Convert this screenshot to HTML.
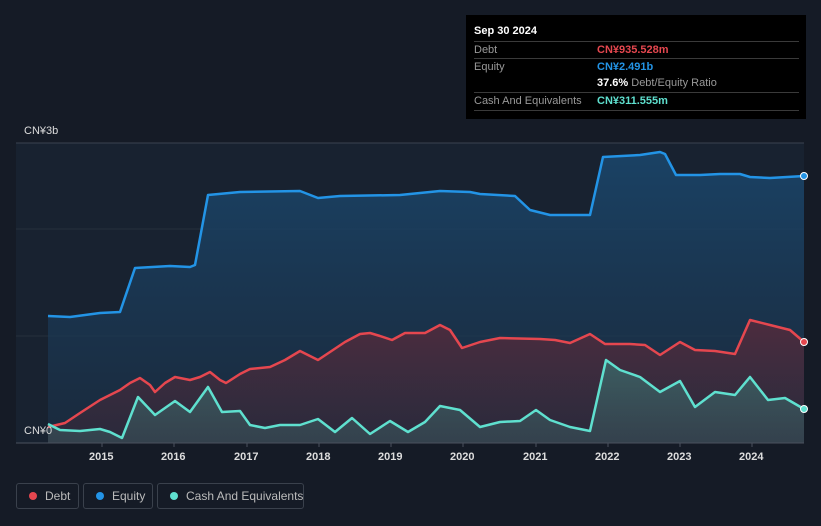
<!DOCTYPE html>
<html><head><meta charset="utf-8"><style>
body{margin:0;width:821px;height:526px;background:#151b26;font-family:"Liberation Sans",sans-serif;overflow:hidden;position:relative}
.tt{position:absolute;left:466px;top:15px;width:340px;height:104px;background:#000;color:#ddd;font-size:11px}
.tt .h{position:absolute;left:8px;top:10px;color:#fff;font-weight:bold;font-size:11px}
.row{position:absolute;left:8px;width:325px;border-top:1px solid #3a3a3a;height:17px;line-height:17px;color:#999}
.row span{position:absolute;left:123px;font-weight:bold}
.leg{position:absolute;top:483px;height:26px;border:1px solid #3a414c;border-radius:3px;color:#bbb;font-size:12px;line-height:24px;box-sizing:border-box;white-space:nowrap}
.leg i{position:absolute;left:12px;top:8px;width:8px;height:8px;border-radius:50%}
.leg b{font-weight:normal;position:absolute;left:28px}
.ax{position:absolute;top:451px;color:#ddd;font-size:11px;font-weight:bold}
</style></head><body>
<svg width="821" height="526" style="position:absolute;left:0;top:0">
<defs>
<linearGradient id="ge" x1="0" y1="0" x2="0" y2="1"><stop offset="0" stop-color="#1a4a72" stop-opacity=".8"/><stop offset="1" stop-color="#1b2f45" stop-opacity=".6"/></linearGradient>
<linearGradient id="gd" x1="0" y1="0" x2="0" y2="1"><stop offset="0" stop-color="#5a2a3a" stop-opacity=".8"/><stop offset="1" stop-color="#3a2a3a" stop-opacity=".5"/></linearGradient>
<linearGradient id="gc" x1="0" y1="0" x2="0" y2="1"><stop offset="0" stop-color="#3a6a6a" stop-opacity=".8"/><stop offset="1" stop-color="#3a5058" stop-opacity=".6"/></linearGradient>
</defs>
<rect x="16" y="143" width="788" height="300" fill="#182230"/>
<line x1="16" y1="143" x2="804" y2="143" stroke="#3a4350"/>
<line x1="16" y1="229" x2="804" y2="229" stroke="#26303c"/>
<line x1="16" y1="336" x2="804" y2="336" stroke="#26303c"/>
<polygon fill="url(#ge)" points="48,443 48,316 70,317 100,313 120,312 135,268 170,266 190,267 195,265 208,195 240,192 300,191 318,198 340,196 400,195 440,191 470,192 480,194 515,196 530,210 550,215 590,215 603,157 640,155 660,152 665,154 676,175 700,175 720,174 740,174 750,177 770,178 804,176 804,443"/>
<polygon fill="url(#gd)" points="48,443 48,427 65,423 80,413 100,400 120,390 130,383 140,378 150,385 155,392 165,383 175,377 190,380 200,377 210,372 220,380 226,383 240,374 250,369 270,367 285,360 300,351 318,360 330,352 345,342 360,334 370,333 380,336 392,340 405,333 425,333 440,325 450,330 462,348 480,342 500,338 540,339 555,340 570,343 590,334 605,344 630,344 645,345 660,355 680,342 695,350 715,351 735,354 750,320 770,325 790,330 804,342 804,443"/>
<polygon fill="url(#gc)" points="48,443 48,424 60,430 80,431 100,429 110,432 122,438 138,397 155,415 175,401 190,412 208,387 222,412 240,411 250,425 265,428 280,425 300,425 318,419 335,432 352,418 370,434 390,421 408,432 425,422 440,406 460,410 480,427 500,422 520,421 536,410 550,420 570,427 590,431 606,360 620,370 640,377 660,392 680,381 695,407 715,392 735,395 750,377 768,400 785,398 804,409 804,443"/>
<polyline fill="none" stroke="#2394e6" stroke-width="2.5" stroke-linejoin="round" points="48,316 70,317 100,313 120,312 135,268 170,266 190,267 195,265 208,195 240,192 300,191 318,198 340,196 400,195 440,191 470,192 480,194 515,196 530,210 550,215 590,215 603,157 640,155 660,152 665,154 676,175 700,175 720,174 740,174 750,177 770,178 804,176"/>
<polyline fill="none" stroke="#e5474f" stroke-width="2.5" stroke-linejoin="round" points="48,427 65,423 80,413 100,400 120,390 130,383 140,378 150,385 155,392 165,383 175,377 190,380 200,377 210,372 220,380 226,383 240,374 250,369 270,367 285,360 300,351 318,360 330,352 345,342 360,334 370,333 380,336 392,340 405,333 425,333 440,325 450,330 462,348 480,342 500,338 540,339 555,340 570,343 590,334 605,344 630,344 645,345 660,355 680,342 695,350 715,351 735,354 750,320 770,325 790,330 804,342"/>
<polyline fill="none" stroke="#5fe0cf" stroke-width="2.5" stroke-linejoin="round" points="48,424 60,430 80,431 100,429 110,432 122,438 138,397 155,415 175,401 190,412 208,387 222,412 240,411 250,425 265,428 280,425 300,425 318,419 335,432 352,418 370,434 390,421 408,432 425,422 440,406 460,410 480,427 500,422 520,421 536,410 550,420 570,427 590,431 606,360 620,370 640,377 660,392 680,381 695,407 715,392 735,395 750,377 768,400 785,398 804,409"/>
<circle cx="804" cy="176" r="3.5" fill="#2394e6" stroke="#fff" stroke-width="1"/>
<circle cx="804" cy="342" r="3.5" fill="#e5474f" stroke="#fff" stroke-width="1"/>
<circle cx="804" cy="409" r="3.5" fill="#5fe0cf" stroke="#fff" stroke-width="1"/>
<line x1="16" y1="443" x2="804" y2="443" stroke="#4a525e"/>
<g stroke="#4a525e"><line x1="102" y1="443" x2="102" y2="447"/><line x1="174" y1="443" x2="174" y2="447"/><line x1="247" y1="443" x2="247" y2="447"/><line x1="319" y1="443" x2="319" y2="447"/><line x1="391" y1="443" x2="391" y2="447"/><line x1="463" y1="443" x2="463" y2="447"/><line x1="536" y1="443" x2="536" y2="447"/><line x1="608" y1="443" x2="608" y2="447"/><line x1="680" y1="443" x2="680" y2="447"/><line x1="752" y1="443" x2="752" y2="447"/></g>
</svg>
<div style="position:absolute;left:24px;top:125px;color:#ddd;font-size:11px">CN¥3b</div>
<div style="position:absolute;left:24px;top:425px;color:#ddd;font-size:11px">CN¥0</div>
<div class="ax" style="left:89px">2015</div><div class="ax" style="left:161px">2016</div><div class="ax" style="left:234px">2017</div><div class="ax" style="left:306px">2018</div><div class="ax" style="left:378px">2019</div><div class="ax" style="left:450px">2020</div><div class="ax" style="left:523px">2021</div><div class="ax" style="left:595px">2022</div><div class="ax" style="left:667px">2023</div><div class="ax" style="left:739px">2024</div>
<div class="tt">
<div class="h">Sep 30 2024</div>
<div class="row" style="top:26px">Debt<span style="color:#e5474f">CN¥935.528m</span></div>
<div class="row" style="top:43px">Equity<span style="color:#2394e6">CN¥2.491b</span></div>
<div class="row" style="top:60px;border-top:none"><span style="color:#fff">37.6% <b style="font-weight:normal;color:#999">Debt/Equity Ratio</b></span></div>
<div class="row" style="top:77px">Cash And Equivalents<span style="color:#5fe0cf">CN¥311.555m</span></div>
<div class="row" style="top:95px;height:0"></div>
</div>
<div class="leg" style="left:16px;width:63px"><i style="background:#e5474f"></i><b>Debt</b></div>
<div class="leg" style="left:83px;width:70px"><i style="background:#2394e6"></i><b>Equity</b></div>
<div class="leg" style="left:157px;width:147px"><i style="background:#5fe0cf"></i><b>Cash And Equivalents</b></div>
</body></html>
